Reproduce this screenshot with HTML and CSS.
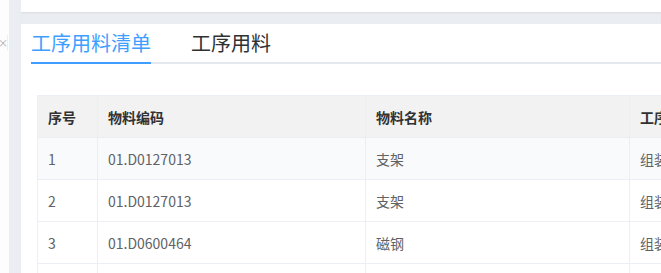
FILE: index.html
```html
<!DOCTYPE html>
<html lang="zh">
<head>
<meta charset="utf-8">
<link rel="stylesheet" href="styles.css">
</head>
<body>
<div class="aside"><div class="collapse">×</div></div>
<div class="gutter"></div>
<div class="main">
  <div class="topbar"></div>
  <div class="band"></div>
  <div class="panel">
    <div class="tabs">
      <div class="tab active">工序用料清单</div>
      <div class="tab">工序用料</div>
    </div>
    <div class="table-wrap">
      <table class="grid">
        <colgroup>
          <col class="c1"><col class="c2"><col class="c3"><col class="c4">
        </colgroup>
        <thead>
          <tr><th>序号</th><th>物料编码</th><th>物料名称</th><th>工序名称</th></tr>
        </thead>
        <tbody>
          <tr class="hover"><td>1</td><td>01.D0127013</td><td>支架</td><td>组装</td></tr>
          <tr><td>2</td><td>01.D0127013</td><td>支架</td><td>组装</td></tr>
          <tr><td>3</td><td>01.D0600464</td><td>磁钢</td><td>组装</td></tr>
          <tr><td>4</td><td>01.D0600465</td><td>磁钢</td><td>组装</td></tr>
        </tbody>
      </table>
    </div>
  </div>
</div>
</body>
</html>
```
FILE: styles.css
```css
html, body {
  margin: 0;
  padding: 0;
  height: 273px;
  overflow: hidden;
  background: #ffffff;
  font-family: "Noto Sans CJK SC", "Noto Sans", sans-serif;
}
body {
  display: flex;
  width: 661px;
}
.aside {
  width: 9px;
  flex: none;
  background: #fdfdfd;
  overflow: hidden;
}
.collapse {
  margin-top: 35px;
  height: 15px;
  width: 7px;
  border-right: 1px solid #eeeeee;
  color: #a8abb2;
  font-size: 10px;
  line-height: 15px;
  text-indent: -2px;
  overflow: hidden;
}
.gutter {
  width: 12px;
  flex: none;
  background: #eaedf1;
}
.main {
  flex: 1;
  min-width: 0;
  display: flex;
  flex-direction: column;
  overflow: hidden;
}
.topbar {
  height: 12px;
  background: #ffffff;
  flex: none;
}
.band {
  height: 12px;
  flex: none;
  background: #eaedf1;
  box-shadow: inset 0 2px 2px -1px #d9dbe0;
}
.panel {
  flex: 1;
  background: #ffffff;
  padding: 0 0 0 10px;
  overflow: hidden;
}
.tabs {
  display: flex;
  gap: 40px;
  height: 38px;
  border-bottom: 2px solid #e4e7ed;
}
.tab {
  height: 38px;
  line-height: 38px;
  font-size: 20px;
  color: #303133;
  border-bottom: 2px solid transparent;
  white-space: nowrap;
}
.tab.active {
  color: #409eff;
  border-bottom-color: #409eff;
}
.table-wrap {
  margin: 31px 0 0 6px;
}
.grid {
  border-collapse: collapse;
  table-layout: fixed;
  width: 700px;
  font-size: 14px;
}
.c1 { width: 60px; }
.c2 { width: 268px; }
.c3 { width: 264px; }
.c4 { width: 108px; }
.grid th, .grid td {
  height: 41px;
  padding: 0 10px;
  border: 1px solid #ebeef5;
  text-align: left;
  white-space: nowrap;
  overflow: hidden;
  box-sizing: border-box;
}
.grid th {
  background: #f2f2f2;
  color: #303133;
  font-weight: 700;
  height: 42px;
}
.grid td {
  color: #606266;
  height: 42px;
}
.grid tr.hover td {
  background: #f9fafc;
}
```
